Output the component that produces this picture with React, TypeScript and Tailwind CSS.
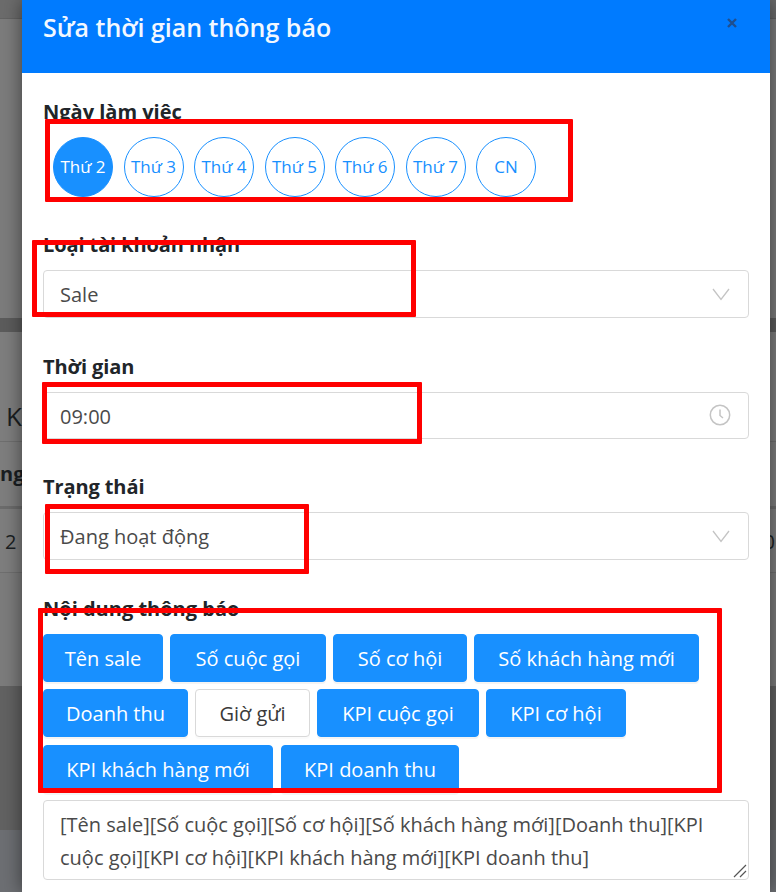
import React from "react";

const days = ["Thứ 2", "Thứ 3", "Thứ 4", "Thứ 5", "Thứ 6", "Thứ 7", "CN"];
type T = { label: string; w: string };
const row1: T[] = [
  { label: "Tên sale", w: "w-[120px]" },
  { label: "Số cuộc gọi", w: "w-[156px]" },
  { label: "Số cơ hội", w: "w-[134px]" },
  { label: "Số khách hàng mới", w: "w-[225px]" },
];
const row2: T[] = [
  { label: "Doanh thu", w: "w-[145px]" },
  { label: "Giờ gửi", w: "w-[115px]" },
  { label: "KPI cuộc gọi", w: "w-[162px]" },
  { label: "KPI cơ hội", w: "w-[140px]" },
];
const row3: T[] = [
  { label: "KPI khách hàng mới", w: "w-[230px]" },
  { label: "KPI doanh thu", w: "w-[178px]" },
];

function Tag({ label, w }: T) {
  const off = label === "Giờ gửi";
  return (
    <button
      className={
        (off
          ? "h-12 pt-[2px] rounded border border-[#d9d9d9] bg-white text-[#3a3a3a] text-[20px] whitespace-nowrap shadow-[0_2px_0_rgba(0,0,0,0.015)] "
          : "h-12 pt-[2px] rounded border border-[#1890ff] bg-[#1890ff] text-white text-[20px] whitespace-nowrap shadow-[0_2px_0_rgba(0,0,0,0.045)] ") + w
      }
    >
      {label}
    </button>
  );
}

function Chevron() {
  return (
    <svg width="18" height="13" viewBox="0 0 18 13" fill="none" stroke="#c4c4c4" strokeWidth="1.3">
      <path d="M1 1l8 10.5L17 1" />
    </svg>
  );
}

function Field({ label, value, icon, h }: { label: string; value: string; icon: React.ReactNode; h: string }) {
  return (
    <div className="flex flex-col">
      <div className="text-[20px] leading-[30px] font-bold tracking-[-0.1px] text-[#212529] -mt-[1px]">{label}</div>
      <div className={"mt-[10px] rounded border border-[#d9d9d9] bg-white flex items-center justify-between pl-4 pr-[18px] text-[20px] text-[#4a4a4a] " + h}>
        <span className="pt-[2px]">{value}</span>
        {icon}
      </div>
    </div>
  );
}

function Box({ className }: { className: string }) {
  return <div className={"absolute border-[5px] border-[#ff0000] rounded-[1px] " + className} />;
}

export default function App() {
  return (
    <div className="relative w-[776px] h-[892px] overflow-hidden bg-[#808080] font-['Open_Sans','Noto_Sans',sans-serif]">
      <div className="flex flex-col h-full text-[#1a1e22]">
        <div className="h-[19px] bg-[#6c6c6c] border-b border-[#636363]" />
        <div className="h-[299px] bg-[#7c7c7c]" />
        <div className="h-[14px] bg-[#5c5c5c]" />
        <div className="h-[110px] bg-[#7e7e7e] border-b border-[#6f6f6f] pt-[66px] text-[26px] leading-[36px] pl-[6px]">K</div>
        <div className="h-[67px] bg-[#7e7e7e] border-b-[3px] border-[#6c6c6c] text-[20px] font-bold pt-[17px]">ng</div>
        <div className="h-[64px] bg-[#7e7e7e] border-b border-[#6f6f6f] text-[20px] pl-[5px] pr-[1px] pt-[18px] flex justify-between items-start">
          <span>2</span>
          <span>0</span>
        </div>
        <div className="h-[113px] bg-[#7c7c7c]" />
        <div className="h-[144px] bg-[#626262]" />
        <div className="flex-1 bg-[#6d6f73]" />
      </div>

      <div className="absolute left-[22px] top-0 w-[748px] h-[892px] bg-white shadow-[0_0_18px_rgba(0,0,0,0.5)] flex flex-col">
        <div className="h-[73px] bg-[#007bff] flex items-start justify-between pl-[21px] pr-[32px] pt-[9px] shrink-0">
          <div className="text-[25px] leading-[36px] font-semibold text-[#f2f8ff]">Sửa thời gian thông báo</div>
          <svg className="mt-[8px]" width="12" height="12" viewBox="0 0 12 12" stroke="#1f4f8f" strokeWidth="2.4">
            <path d="M2 2l8 8M10 2l-8 8" />
          </svg>
        </div>

        <div className="flex flex-col px-[21px]">
          <div className="mt-[24px] text-[20px] leading-[30px] font-bold text-[#212529]">Ngày làm việc</div>
          <div className="mt-[10px] ml-[10px] flex gap-[10.5px]">
            {days.map((d, i) => (
              <div
                key={d}
                className={
                  i === 0
                    ? "w-[60px] h-[60px] rounded-full bg-[#1890ff] border border-[#1890ff] text-white text-[17px] flex items-center justify-center"
                    : "w-[60px] h-[60px] rounded-full bg-white border border-[#1890ff] text-[#1890ff] text-[17px] flex items-center justify-center"
                }
              >
                {d}
              </div>
            ))}
          </div>

          <div className="mt-[34px]">
            <Field label="Loại tài khoản nhận" value="Sale" h="h-12" icon={<Chevron />} />
          </div>
          <div className="mt-[35px]">
            <Field
              label="Thời gian"
              value="09:00"
              h="h-[47px]"
              icon={
                <svg className="-mr-[1px] mb-[1px]" width="22" height="22" viewBox="0 0 22 22" fill="none" stroke="#c4c4c4" strokeWidth="1.5">
                  <circle cx="11" cy="11" r="9.7" />
                  <path d="M11 5.5V11.5L14 14" />
                </svg>
              }
            />
          </div>
          <div className="mt-[34px]">
            <Field label="Trạng thái" value="Đang hoạt động" h="h-12" icon={<Chevron />} />
          </div>

          <div className="mt-[34px] text-[20px] leading-[30px] font-bold text-[#212529]">Nội dung thông báo</div>
          <div className="mt-[10px] flex flex-col">
            <div className="flex gap-[7px]">{row1.map((t) => <Tag key={t.label} {...t} />)}</div>
            <div className="mt-[7px] flex gap-[7px]">{row2.map((t) => <Tag key={t.label} {...t} />)}</div>
            <div className="mt-[8px] flex gap-[8px]">{row3.map((t) => <Tag key={t.label} {...t} />)}</div>
          </div>
          <div className="relative mt-[7px] h-[80px] rounded border border-[#d9d9d9] bg-white px-4 py-[7px] text-[20px] leading-[33px] text-[#4a4a4a]">
            [Tên sale][Số cuộc gọi][Số cơ hội][Số khách hàng mới][Doanh thu][KPI cuộc gọi][KPI cơ hội][KPI khách hàng mới][KPI doanh thu]
            <svg className="absolute right-[1px] bottom-[1px]" width="14" height="14" viewBox="0 0 14 14" stroke="#555" strokeWidth="1.2">
              <path d="M1 13L13 1M7 13l6-6" />
            </svg>
          </div>
        </div>
      </div>

      <Box className="left-[45px] top-[119px] w-[528px] h-[83px]" />
      <Box className="left-[32px] top-[240px] w-[384px] h-[77px]" />
      <Box className="left-[42px] top-[382px] w-[380px] h-[62px]" />
      <Box className="left-[45px] top-[504px] w-[264px] h-[70px]" />
      <Box className="left-[38px] top-[608px] w-[684px] h-[185px]" />
    </div>
  );
}
